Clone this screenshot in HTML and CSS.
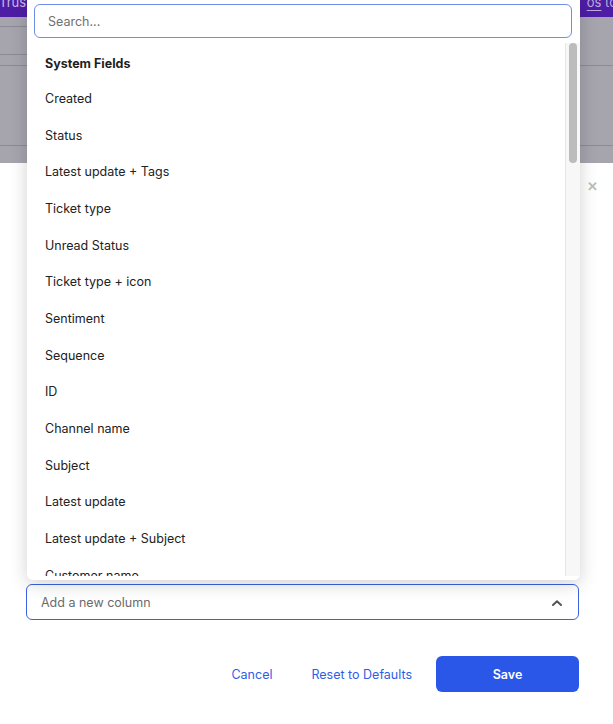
FILE: index.html
```html
<!DOCTYPE html>
<html>
<head>
<meta charset="utf-8">
<link rel="stylesheet" href="styles.css">
</head>
<body>
<div class="page">
  <div class="topbar">
    <span class="tb-left">Trus</span>
    <span class="tb-right"><u>os</u> to</span>
  </div>
  <div class="overlay">
    <div class="ov-side ov-left">
      <div class="r r1"></div><div class="r r2"></div><div class="r r3"></div><div class="r r4"></div>
    </div>
    <div class="ov-mid"></div>
    <div class="ov-side ov-right">
      <div class="r r5"></div><div class="r r4"></div>
    </div>
  </div>
  <div class="modal">
    <div class="close">✕</div>
    <div class="select">
      <span class="select-text">Add a new column</span>
      <svg class="chev" width="10" height="6" viewBox="0 0 10 6"><path d="M1 5 L5 1.3 L9 5" fill="none" stroke="#555" stroke-width="2" stroke-linecap="round" stroke-linejoin="round"/></svg>
    </div>
    <div class="footer">
      <button class="link">Cancel</button>
      <button class="link">Reset to Defaults</button>
      <button class="save">Save</button>
    </div>
  </div>

  <div class="dropdown">
    <div class="search-wrap">
      <div class="search">Search...</div>
    </div>
    <div class="list-wrap">
      <div class="list">
        <div class="group">System Fields</div>
        <div class="item">Created</div>
        <div class="item">Status</div>
        <div class="item">Latest update + Tags</div>
        <div class="item">Ticket type</div>
        <div class="item">Unread Status</div>
        <div class="item">Ticket type + icon</div>
        <div class="item">Sentiment</div>
        <div class="item">Sequence</div>
        <div class="item">ID</div>
        <div class="item">Channel name</div>
        <div class="item">Subject</div>
        <div class="item">Latest update</div>
        <div class="item">Latest update + Subject</div>
        <div class="item">Customer name</div>
      </div>
      <div class="track"><div class="thumb"></div></div>
    </div>
  </div>
</div>
</body>
</html>
```

FILE: styles.css
```css
* { box-sizing: border-box; }
html, body { margin: 0; padding: 0; }
body {
  width: 613px;
  height: 724px;
  overflow: hidden;
  font-family: Inter, "Noto Sans", sans-serif;
  font-size: 12.5px;
  color: #1f1f1f;
  background: #fff;
}
.page { position: relative; width: 613px; height: 724px; }

.topbar {
  height: 17px;
  background: #4f1ca6;
  display: flex;
  justify-content: space-between;
  overflow: hidden;
  color: #c7bde0;
  font-size: 13px;
  line-height: 13px;
}
.tb-left { margin-top: -4px; margin-left: -1px; }
.tb-right { margin-top: -4px; margin-right: -4px; color: #b9aedb; }
.tb-right u { text-underline-offset: 3px; }

.overlay {
  height: 146px;
  background: #a6a4ad;
  display: flex;
}
.ov-side { display: flex; flex-direction: column; }
.ov-left { width: 27px; }
.ov-right { width: 34px; }
.ov-mid { flex: 1; }
.r { border-bottom: 1px solid #8d8a97; }
.r1 { height: 10px; }
.r2 { height: 28px; }
.r3 { height: 11px; }
.r4 { height: 80px; }
.r5 { height: 49px; }

.modal {
  position: relative;
  padding: 421px 34px 0 26px;
}
.close {
  position: absolute;
  right: 15px;
  top: 15px;
  color: #bdbdbd;
  font-size: 13px;
  font-weight: 700;
}
.select {
  height: 36px;
  border: 1px solid #3b63e0;
  border-radius: 6px;
  display: flex;
  align-items: center;
  justify-content: space-between;
  padding: 0 16px 0 14px;
}
.select-text { color: #6b6b6b; }
.chev { margin-top: 1px; }

.footer {
  margin-top: 36px;
  display: flex;
  justify-content: flex-end;
  align-items: center;
}
button { font-family: inherit; font-size: 12.5px; border: 0; background: none; cursor: pointer; }
.link { color: #2f5ee6; padding: 0; margin-right: 39px; }
.link + .link { margin-right: 24px; }
.save {
  width: 143px;
  height: 36px;
  background: #2b57e8;
  color: #fff;
  font-weight: 600;
  border-radius: 6px;
}

.dropdown {
  position: absolute;
  left: 27px;
  top: 0;
  width: 553px;
  height: 580px;
  background: #fff;
  border-radius: 0 0 6px 6px;
  box-shadow: 0 4px 18px rgba(0,0,0,0.18);
  display: flex;
  flex-direction: column;
  overflow: hidden;
}
.search-wrap { padding: 4px 8px 0 7px; }
.search {
  height: 34px;
  border: 1px solid #6d8fe6;
  border-radius: 6px;
  padding: 0 13px;
  display: flex;
  align-items: center;
  color: #707070;
}
.list-wrap {
  flex: 1;
  display: flex;
  margin-top: 5px;
  min-height: 0;
  padding-bottom: 4px;
}
.list {
  flex: 1;
  overflow: hidden;
  padding: 0 0 0 18px;
  display: flex;
  flex-direction: column;
}
.group {
  flex: none;
  height: 37px;
  padding-top: 13px;
  font-weight: 700;
  color: #1f1f1f;
}
.item {
  flex: none;
  height: 36.7px;
  display: flex;
  align-items: center;
  color: #222;
}
.track {
  width: 15px;
  background: #f7f7f7;
  border-left: 1px solid #e6e6e6;
  padding: 0 3px 0 3px;
}
.thumb {
  width: 8px;
  height: 120px;
  background: #bcbcbc;
  border-radius: 4px;
}
```
